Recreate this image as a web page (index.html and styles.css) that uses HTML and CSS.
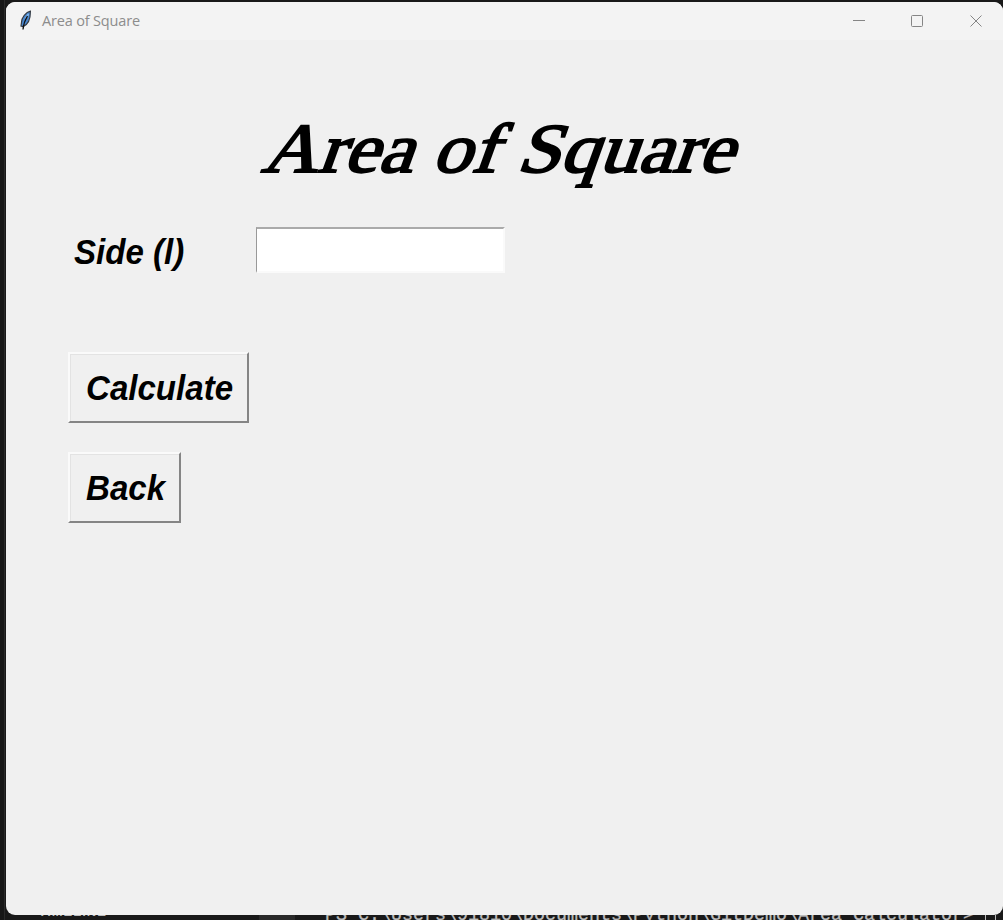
FILE: index.html
```html
<!DOCTYPE html>
<html lang="en">
<head>
<meta charset="utf-8">
<title>Area of Square</title>
<link rel="stylesheet" href="styles.css">
</head>
<body>
<main class="window">
  <header class="titlebar">
    <svg class="feather" width="16" height="22" viewBox="0 0 16 22"><path d="M12.400 1.200C8 2 3.400 8 3.500 12.500L3 16l2 .6C9 15 12.500 10 12.400 1.200z" fill="#4a88d0" stroke="#353b43" stroke-width="1.200"/><path d="M10.500 4L7.500 9" stroke="#82b8ed" stroke-width="1.600"/><path d="M9.500 6C7 10 5.500 14 5 19.500" fill="none" stroke="#111" stroke-width="1.300"/></svg>
    <span class="caption">Area of Square</span>
    <svg class="controls" width="130" height="14" viewBox="0 0 130 14" fill="none" stroke="#858585" stroke-width="1"><path d="M0 6.500h12"/><rect x="58.500" y="1.500" width="11" height="11" rx="1"/><path d="M117.500 1.500l11 11M128.500 1.500l-11 11"/></svg>
  </header>
  <h1 class="heading"><span class="heading-text">Area of Square</span></h1>
  <section class="form">
    <label class="label" for="side"><span class="label-text">Side (l)</span></label>
    <input class="entry" id="side" type="text">
  </section>
  <div class="actions">
    <button class="button calculate"><span class="button-text">Calculate</span></button>
    <button class="button back"><span class="button-text">Back</span></button>
  </div>
</main>
<footer class="desktop">
  <span class="timeline">&gt; <b class="timeline-name">TIMELINE</b></span>
  <span class="tab"></span>
  <span class="terminal">PS C:\Users\91810\Documents\Python\GitDemo\Area Calculator&gt; <i class="cursor"></i></span>
</footer>
</body>
</html>
```
FILE: styles.css
```css
* { box-sizing: border-box; }
body {
  margin: 0;
  height: 920px;
  padding: 2px 0 0 6px;
  overflow: hidden;
  background: linear-gradient(90deg, #171717 4px, #2b2b2b 4px 5px, #191919 5px);
}
.window {
  height: 913px;
  background: #f0f0f0;
  border-radius: 9px;
  overflow: hidden;
}
.titlebar {
  height: 38px;
  display: flex;
  align-items: center;
  padding: 0 20px 0 12px;
  background: #f3f3f3;
}
.feather { margin: 0 8px 1px 0; }
.caption {
  flex: 1;
  padding-bottom: 1px;
  color: #8c8c8c;
  font: 14.500px/20px "Open Sans", sans-serif;
  letter-spacing: -.17px;
}
.controls { margin-bottom: 1px; }
.heading {
  height: 90px;
  margin: 64px 0 0 255px;
  font: 400 70px/90px "Liberation Serif", serif;
  color: #000;
  white-space: nowrap;
}
.heading-text {
  display: inline-block;
  -webkit-text-stroke: 2px #000;
  transform-origin: 0 74%;
  transform: scaleX(1.113) skewX(-18deg);
}
.form {
  display: flex;
  align-items: center;
  height: 46px;
  margin: 33px 0 0 68px;
}
.label {
  width: 182px;
  padding-top: 3px;
  font: italic bold 35px/46px "Liberation Sans", sans-serif;
}
.label-text, .button-text { display: inline-block; transform-origin: 0 50%; transform: scaleX(.945); }
.entry {
  width: 249px;
  height: 46px;
  border: 2px solid #fafafa;
  border-top-color: #aaa;
  border-left: 1px solid #999;
  background: #fff;
  outline: none;
}
.actions {
  display: flex;
  flex-direction: column;
  gap: 29px;
  margin: 79px 0 0 62px;
}
.button {
  height: 71px;
  padding: 0 0 0 16px;
  border: 2px solid #fafafa;
  border-right-color: #858585;
  border-bottom-color: #858585;
  background: #f0f0f0;
  box-shadow: inset 1px 1px #e3e3e3;
  color: #000;
  text-align: left;
  font: italic bold 35px/40px "Liberation Sans", sans-serif;
}
.calculate { width: 181px; }
.back { width: 113px; }
.desktop {
  display: flex;
  height: 5px;
  overflow: hidden;
  white-space: pre;
  color: #bdbdbd;
}
.timeline { width: 253px; padding-left: 9px; font: 13px/14px "Liberation Sans", sans-serif; margin-top: -10px; height: 14px; }
.timeline-name { padding-left: 12px; letter-spacing: 1px; }
.tab { width: 36px; background: #292929; }
.terminal {
  margin: -9px 0 0 30px;
  font: 18.330px/20px "Liberation Mono", monospace;
  -webkit-text-stroke: .3px #bdbdbd;
}
.cursor { display: inline-block; width: 11px; height: 19px; border: 1px solid #bdbdbd; vertical-align: top; }
```
